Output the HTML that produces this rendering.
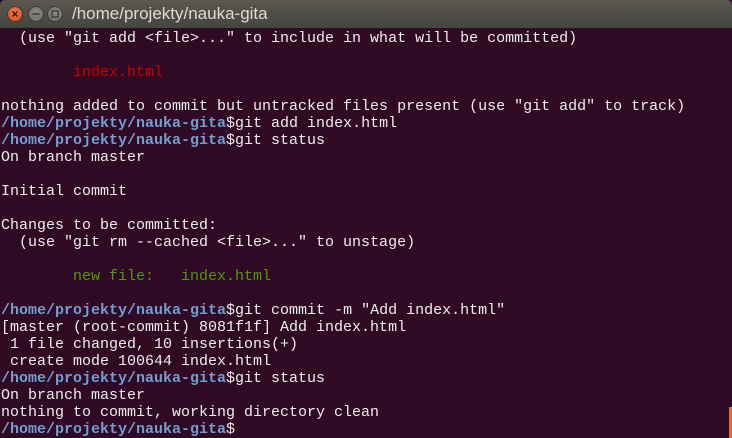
<!DOCTYPE html>
<html><head><meta charset="utf-8"><style>
html,body{margin:0;padding:0;width:732px;height:438px;overflow:hidden;background:#300a24}
#tb{position:absolute;left:0;top:0;width:732px;height:28px;background:linear-gradient(#5a5850,#45443f);border-radius:5px 5px 0 0}
.b{position:absolute;top:6px;width:16px;height:16px;border-radius:50%;box-sizing:border-box}
#c{left:7px;background:radial-gradient(circle at 50% 40%,#f37a4e,#dc4a1b);border:1px solid #3a3935}
#m{left:28px;background:radial-gradient(circle at 50% 40%,#8a8983,#6c6b66);border:1px solid #3a3935}
#x{left:47px;background:radial-gradient(circle at 50% 40%,#8a8983,#6c6b66);border:1px solid #3a3935}
#t{position:absolute;left:72px;top:4px;font:17px "Liberation Sans",sans-serif;color:#dfdbd2}
pre{position:absolute;left:1px;top:30px;margin:0;font:15px/17px "Liberation Mono",monospace;color:#eeeeec}
.p{color:#729fcf;font-weight:bold}.r{color:#cc0000}.g{color:#4e9a06}
#sb{position:absolute;left:729px;top:407px;width:3px;height:31px;background:#e46b34}
</style></head><body>
<div id="tb"><div class="b" id="c"><svg width="14" height="14" viewBox="0 0 14 14"><path d="M4.5 4.5L9.5 9.5M9.5 4.5L4.5 9.5" stroke="#3a1a10" stroke-width="1.5"/></svg></div><div class="b" id="m"><svg width="14" height="14"><path d="M3.5 7H10.5" stroke="#3a3935" stroke-width="1.5"/></svg></div><div class="b" id="x"><svg width="14" height="14"><rect x="4" y="4" width="6" height="6" fill="none" stroke="#3a3935" stroke-width="1.3"/></svg></div><div id="t">/home/projekty/nauka-gita</div></div>
<pre>  (use "git add &lt;file&gt;..." to include in what will be committed)

        <span class="r">index.html</span>

nothing added to commit but untracked files present (use "git add" to track)
<span class="p">/home/projekty/nauka-gita</span>$git add index.html
<span class="p">/home/projekty/nauka-gita</span>$git status
On branch master

Initial commit

Changes to be committed:
  (use "git rm --cached &lt;file&gt;..." to unstage)

        <span class="g">new file:   index.html</span>

<span class="p">/home/projekty/nauka-gita</span>$git commit -m "Add index.html"
[master (root-commit) 8081f1f] Add index.html
 1 file changed, 10 insertions(+)
 create mode 100644 index.html
<span class="p">/home/projekty/nauka-gita</span>$git status
On branch master
nothing to commit, working directory clean
<span class="p">/home/projekty/nauka-gita</span>$</pre>
<div id="sb"></div>
</body></html>
